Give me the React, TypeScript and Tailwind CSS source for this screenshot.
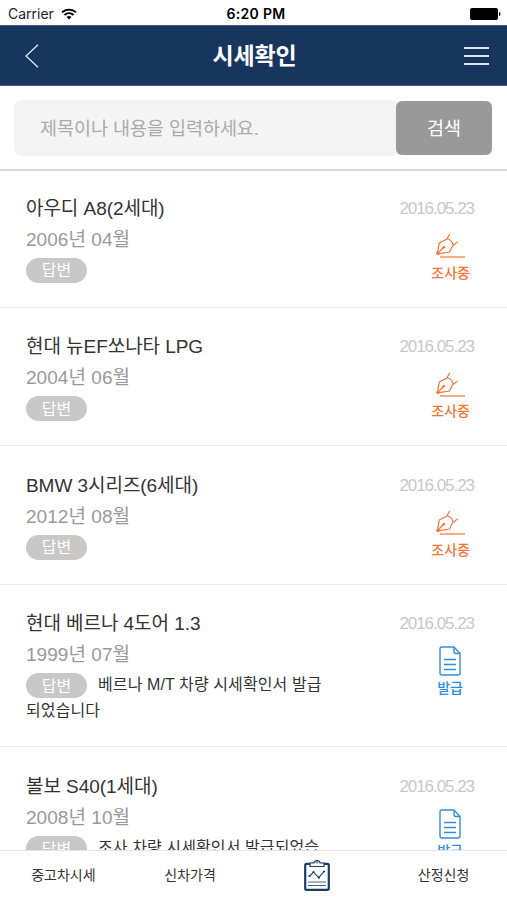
type Status = "checking" | "issued";

interface Inquiry {
  id: number;
  title: string;
  date: string;
  registered: string;
  status: Status;
  answer?: string;
}

const inquiries: Inquiry[] = [
  { id: 1, title: "아우디 A8(2세대)", date: "2006년 04월", registered: "2016.05.23", status: "checking" },
  { id: 2, title: "현대 뉴EF쏘나타 LPG", date: "2004년 06월", registered: "2016.05.23", status: "checking" },
  { id: 3, title: "BMW 3시리즈(6세대)", date: "2012년 08월", registered: "2016.05.23", status: "checking" },
  {
    id: 4,
    title: "현대 베르나 4도어 1.3",
    date: "1999년 07월",
    registered: "2016.05.23",
    status: "issued",
    answer: "베르나 M/T 차량 시세확인서 발급되었습니다",
  },
  {
    id: 5,
    title: "볼보 S40(1세대)",
    date: "2008년 10월",
    registered: "2016.05.23",
    status: "issued",
    answer: "조사 차량 시세확인서 발급되었습니다",
  },
];

export default function App() {
  return (
    <div className="flex h-[900px] w-full flex-col overflow-hidden bg-white font-['Liberation_Sans','Noto_Sans_CJK_KR',sans-serif] text-[#333]">
      <StatusBar />
      <Header />
      <SearchBar />
      <main className="-mt-[2px] min-h-0 flex-1 overflow-hidden">
        {inquiries.map((item) => (
          <InquiryRow key={item.id} item={item} />
        ))}
      </main>
      <TabBar />
    </div>
  );
}

function StatusBar() {
  return (
    <div className="grid h-[25px] shrink-0 grid-cols-3 items-center pt-[3px] pr-[6px] pl-2 font-[Inter,sans-serif] text-black">
      <div className="flex items-center gap-[7px]">
        <span className="text-[14px] leading-none text-[#222]">Carrier</span>
        <svg width="16" height="12" viewBox="0 0 16 12" fill="none" stroke="currentColor" strokeWidth="1.8">
          <path d="M1 4.4a10 10 0 0 1 14 0" />
          <path d="M3.5 7a6.4 6.4 0 0 1 9 0" />
          <path d="M8 11.6 5.5 9.1a3.6 3.6 0 0 1 5 0z" fill="currentColor" stroke="none" />
        </svg>
      </div>
      <span className="ml-[3px] text-center text-[14px] leading-none font-semibold tracking-[0.3px] whitespace-nowrap">
        6:20 PM
      </span>
      <svg className="justify-self-end" width="31" height="12" viewBox="0 0 31 12" fill="currentColor">
        <rect x="0" y="0" width="28" height="12" rx="2" />
        <path d="M29 4c2 .6 2 3.4 0 4z" />
      </svg>
    </div>
  );
}

function Header() {
  return (
    <header className="flex h-[61px] shrink-0 items-center justify-between border-y border-[#3c5c80] bg-[#18365d] pr-[18px] pl-[25px] text-white">
      <button type="button" aria-label="뒤로">
        <svg width="14" height="24" viewBox="0 0 14 24" fill="none" stroke="#dce6f2" strokeWidth="1.3">
          <path d="M13 .7 1 12l12 11.3" />
        </svg>
      </button>
      <h1 className="mt-[2px] ml-[6px] text-[23px] leading-none font-bold tracking-[-0.1px]">시세확인</h1>
      <button type="button" aria-label="메뉴">
        <svg width="25" height="20" viewBox="0 0 25 20" stroke="#dce6f2" strokeWidth="1.8">
          <path d="M0 2h25M0 10h25M0 18h25" />
        </svg>
      </button>
    </header>
  );
}

function SearchBar() {
  return (
    <div className="flex h-[85px] shrink-0 items-center border-b-2 border-[#dcdcdc] px-[14px] pr-[15px]">
      <div className="-mr-1 flex h-14 flex-1 items-center rounded-lg bg-[#f4f4f4] pt-[2px] pl-[26px] text-[18.5px] tracking-[-0.05px] text-[#aaa]">
        제목이나 내용을 입력하세요.
      </div>
      <button type="button" className="h-[54px] w-[96px] rounded-md bg-[#999] pt-[2px] text-[18.5px] text-white">
        검색
      </button>
    </div>
  );
}

function InquiryRow({ item }: { item: Inquiry }) {
  return (
    <section className="flex h-auto min-h-[138.5px] justify-between border-b border-[#ececec] pt-[23.5px] pr-[33px] pb-[23px] pl-[26px]">
      <div className="w-[304px]">
        <h2 className="text-[19px] leading-[31px] tracking-[-0.05px] whitespace-nowrap">{item.title}</h2>
        <p className="text-[19px] leading-[31px] tracking-[0.05px] text-[#999]">{item.date}</p>
        <p className="mt-[2px] text-[16px] leading-[25px] tracking-[0.1px] break-all">
          <span className="mr-[11px] inline-flex h-[25px] w-[61px] items-center justify-center rounded-full bg-[#c8c8c8] pt-px align-middle text-[16px] text-white">
            답변
          </span>
          {item.answer}
        </p>
      </div>
      <div className="flex flex-col items-end">
        <span className="text-[17px] leading-[31px] tracking-[-1.05px] text-[#c8c8c8]">{item.registered}</span>
        {item.status === "checking" ? (
          <div className="mt-[9.5px] mr-[4px] flex flex-col items-center text-[#f37435]">
            <PenIcon />
            <span className="mt-[4.5px] text-[14px] leading-5 font-medium">조사중</span>
          </div>
        ) : (
          <div className="mt-[7px] mr-[11px] flex flex-col items-center text-[#2f8fdc]">
            <DocumentIcon />
            <span className="mt-[2px] text-[14px] leading-5 font-medium">발급</span>
          </div>
        )}
      </div>
    </section>
  );
}

function PenIcon() {
  return (
    <svg width="30" height="25" viewBox="0 0 30 25" fill="none" stroke="currentColor" strokeWidth="1.2">
      <path d="M1.3 20.8 3.3 10l8.2-4.3c3 1 4.8 3 5.6 6.1L13.5 19z" strokeLinejoin="round" />
      <path d="M11.5 5.7c-.8-2.300 2.200-2.300 2-5M17.100 11.800c1.800.8 2.200-2.300 5-2.800" />
      <path d="m1.500 20.500 6-6" />
      <circle cx="7.800" cy="14.300" r="1.300" fill="currentColor" stroke="none" />
      <circle cx="1.900" cy="20.400" r="1.600" fill="currentColor" stroke="none" />
      <path d="M4 24h25" />
    </svg>
  );
}

function DocumentIcon() {
  return (
    <svg width="22" height="30" viewBox="0 0 22 30" fill="none" stroke="currentColor" strokeWidth="1.4" strokeLinejoin="round">
      <path d="M3 1h12l6 6.500V27a2 2 0 0 1-2 2H3a2 2 0 0 1-2-2V3a2 2 0 0 1 2-2z" />
      <path d="M15 1v4.500a2 2 0 0 0 2 2h4" />
      <path d="M5 13.500h12M5 18.500h12M5 23.500h12" />
    </svg>
  );
}

function ClipboardIcon() {
  return (
    <svg width="26" height="33" viewBox="0 0 26 33" fill="none" stroke="#1c3c68">
      <rect x="1.2" y="5.8" width="23.6" height="26" rx="1.5" strokeWidth="2.2" />
      <path d="M6 8.500V5h3.800a3.300 3.300 0 0 1 6.400 0H20v3.500z" fill="#fff" strokeWidth="1.2" />
      <circle cx="13" cy="4" r="1.1" strokeWidth=".7" />
      <path d="m5.500 18 4-3.800 5.300 5.500 5.200-6.200" strokeWidth="1.1" />
      <g fill="#1c3c68" stroke="none">
        <circle cx="5.5" cy="18" r="1.1" />
        <circle cx="9.5" cy="14.2" r="1.1" />
        <circle cx="14.8" cy="19.7" r="1.1" />
        <circle cx="20" cy="13.5" r="1.1" />
      </g>
      <path d="M4 24h18M4 27.500h18" strokeWidth=".8" />
    </svg>
  );
}

function TabBar() {
  return (
    <nav className="grid h-[50px] shrink-0 grid-cols-4 items-center border-t border-[#e4e4e4] bg-white text-center text-[14px]">
      <span>중고차시세</span>
      <span>신차가격</span>
      <span className="-mt-[3px] flex justify-center">
        <ClipboardIcon />
      </span>
      <span>산정신청</span>
    </nav>
  );
}
